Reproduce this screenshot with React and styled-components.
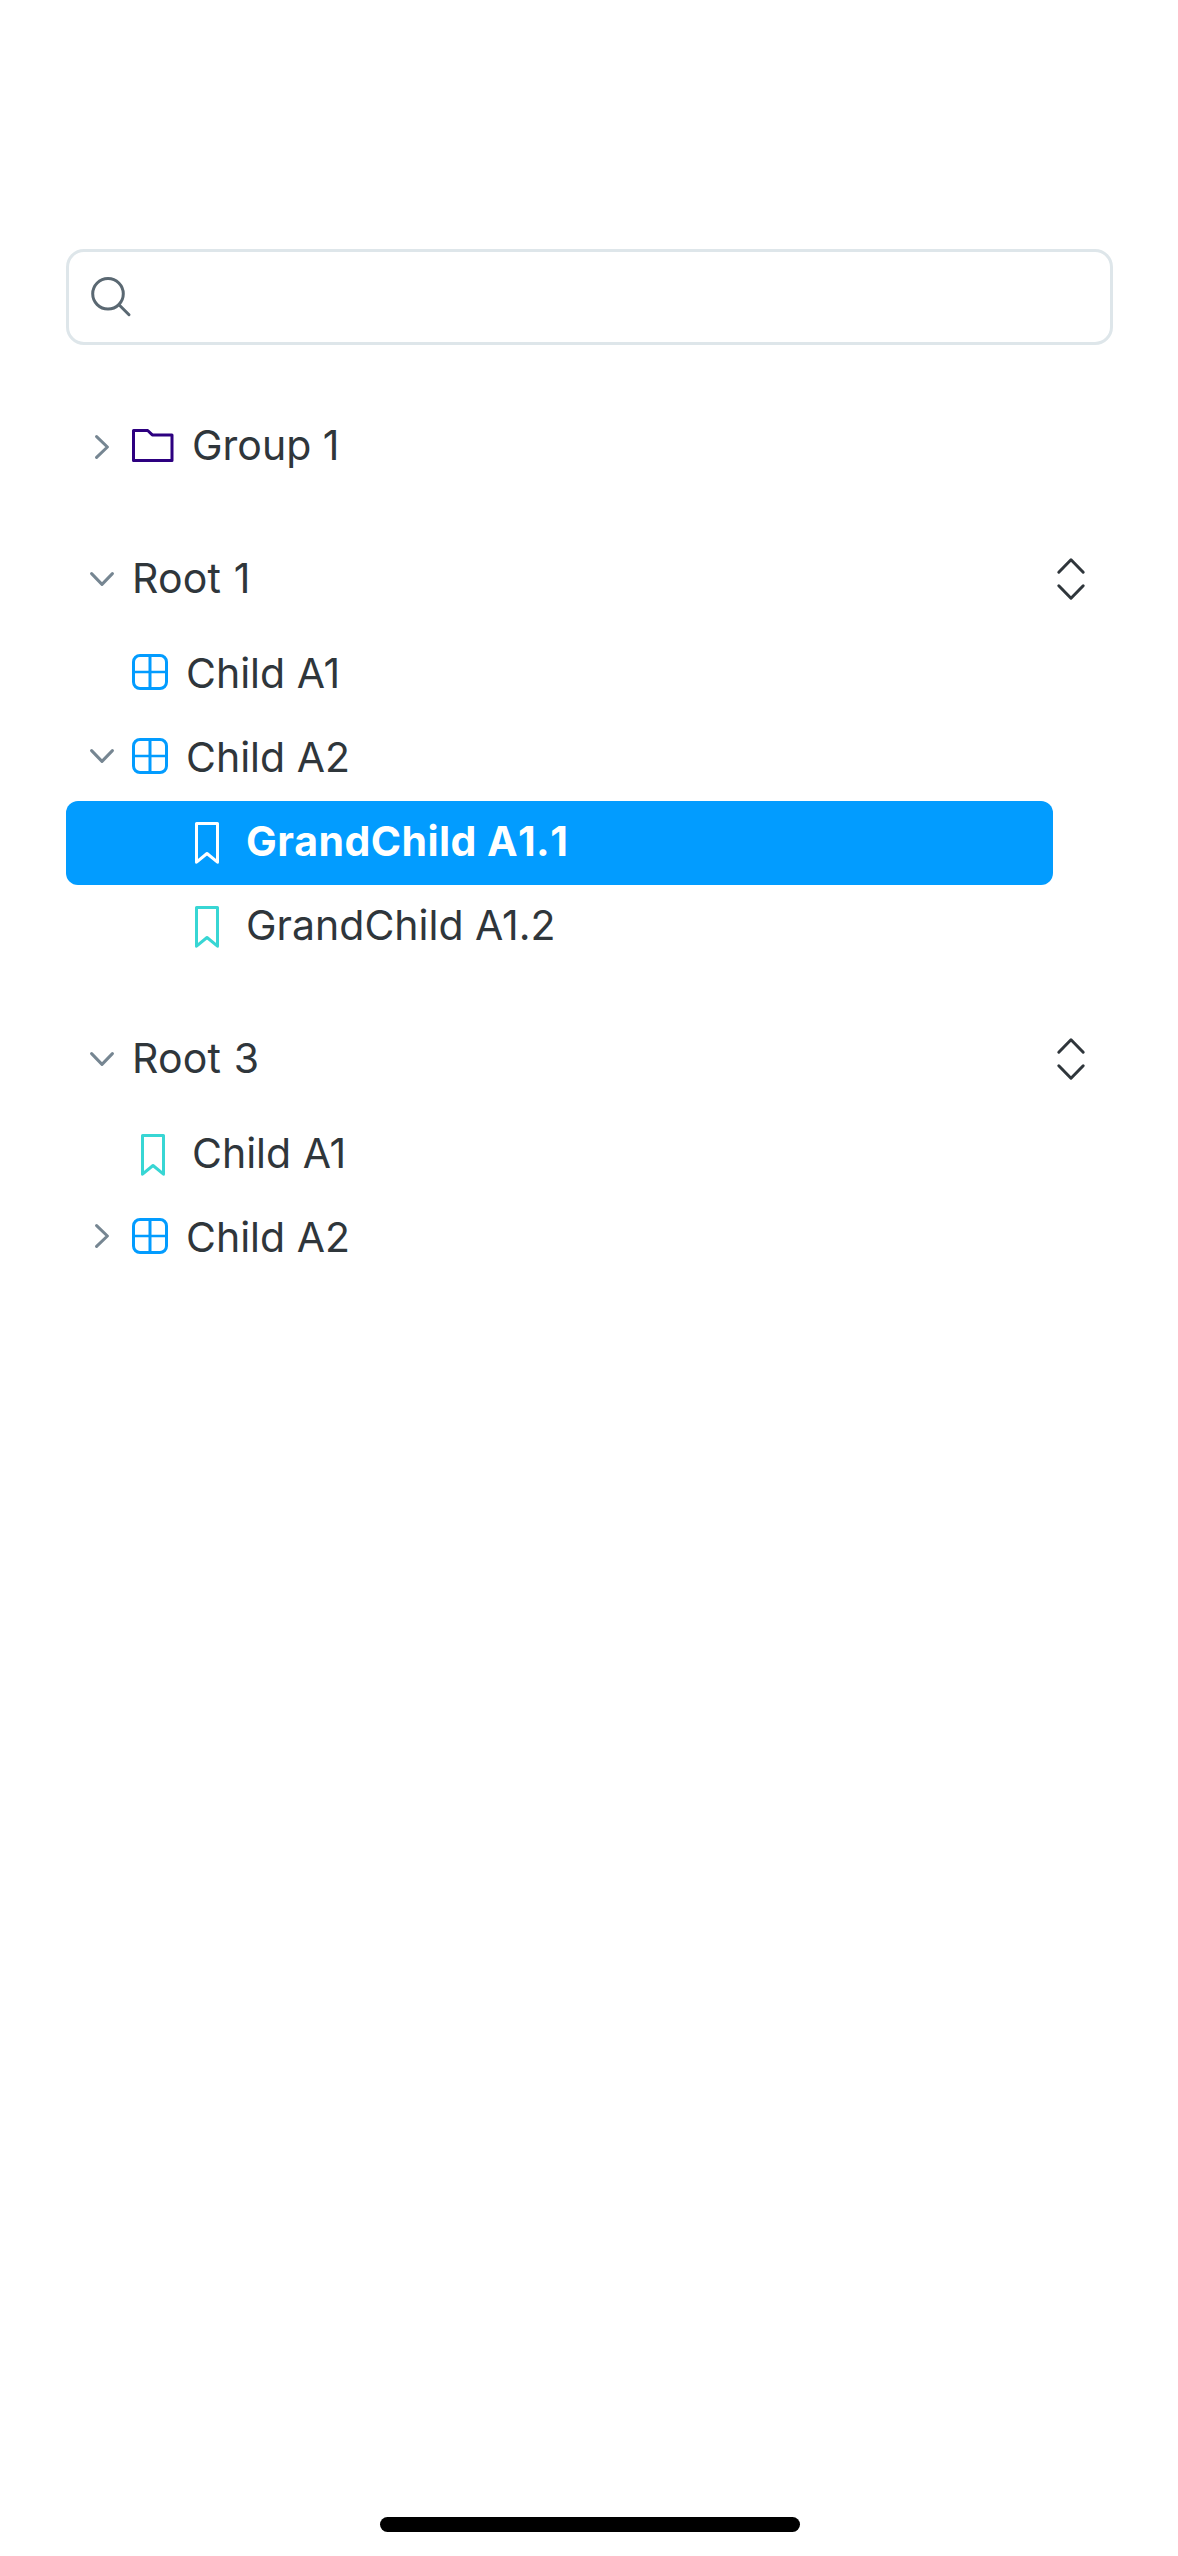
import React from "react";
import styled, { createGlobalStyle } from "styled-components";

const GlobalStyle = createGlobalStyle`
  *, *::before, *::after { box-sizing: border-box; }
  html, body { margin: 0; padding: 0; background: #ffffff; }
  body { font-family: Inter, "Liberation Sans", sans-serif; }
`;

const Screen = styled.main`
  display: flex;
  flex-direction: column;
  width: 1178px;
  height: 2556px;
  padding: 249px 65px 24px 66px;
  background: #ffffff;
  overflow: hidden;
`;

const SearchField = styled.label`
  display: flex;
  align-items: center;
  height: 96px;
  padding: 0 21px;
  border: 3px solid #dee6ea;
  border-radius: 18px;
  color: #5a6872;
`;

const SearchInput = styled.input`
  flex: 1;
  margin-left: 18px;
  border: 0;
  outline: 0;
  background: transparent;
  font: 400 41px Inter, sans-serif;
`;

const Tree = styled.nav`
  display: flex;
  flex-direction: column;
  margin-top: 60px;
`;

const Section = styled.section`
  display: flex;
  flex-direction: column;
  margin-top: 49px;
`;

const Row = styled.div`
  display: flex;
  align-items: flex-start;
  height: 84px;
  margin-right: 60px;
  padding-left: ${(p) => 24 + (p.$level || 0) * 54}px;
  border-radius: 12px;
  background: ${(p) => (p.$selected ? "#029cff" : "transparent")};
  color: ${(p) => (p.$selected ? "#ffffff" : "#2f363b")};
`;

const Header = styled(Row)`
  margin-right: 0;
  margin-bottom: 11px;
  padding-right: 24px;
`;

const ToggleSlot = styled.span`
  display: flex;
  flex: none;
  width: 24px;
  margin-right: 18px;
  padding-top: ${(p) => p.$top ?? 27}px;
  color: #768692;
`;

const IconSlot = styled.span`
  display: flex;
  flex: none;
  margin-right: 18px;
  padding-top: 21px;
  color: ${(p) => p.$color};
`;

const Label = styled.span`
  flex: 1;
  line-height: 80px;
  font-size: 41px;
  font-weight: ${(p) => (p.$bold ? 700 : 400)};
  font-kerning: ${(p) => (p.$bold ? "none" : "auto")};
  letter-spacing: ${(p) => (p.$bold ? 0.42 : 0)}px;
  white-space: nowrap;
`;

const Title = styled(Label)`
  letter-spacing: 0.15px;
  word-spacing: 1.2px;
`;

const SortSlot = styled.span`
  display: flex;
  padding-top: 17px;
`;

const Spacer = styled.div`
  flex: 1;
`;

const HomeIndicator = styled.div`
  width: 420px;
  height: 15px;
  margin-left: 314px;
  border-radius: 8px;
  background: #000000;
`;

const line = {
  fill: "none",
  stroke: "currentColor",
  strokeWidth: 3,
  strokeLinecap: "round",
  strokeLinejoin: "round",
};

const SearchIcon = () => (
  <svg width="42" height="42" viewBox="0 0 42 42" {...line}>
    <circle cx="18" cy="17.8" r="15.3" />
    <path d="M29 28.7 39 38.7" />
  </svg>
);

const ChevronRight = () => (
  <svg width="24" height="24" viewBox="0 0 24 24" {...line}>
    <path d="M6.6 1.6 17.4 12 6.6 22.4" />
  </svg>
);

const ChevronDown = () => (
  <svg width="24" height="24" viewBox="0 0 24 24" {...line}>
    <path d="M1.6 6.6 12 17.4 22.4 6.6" />
  </svg>
);

const FolderIcon = () => (
  <svg width="42" height="42" viewBox="0 0 42 42" {...line}>
    <path d="M1.5 4.5H15.7L20.3 8.9H40V34.6H1.5Z" />
  </svg>
);

const GridIcon = () => (
  <svg width="36" height="36" viewBox="0 0 36 36" {...line}>
    <rect x="1.5" y="1.5" width="33" height="33" rx="6.5" />
    <path d="M18 2V34" />
    <path d="M2 18H34" strokeWidth="2.5" />
  </svg>
);

const BookmarkIcon = () => (
  <svg width="42" height="42" viewBox="0 0 42 42" {...line}>
    <path d="M10.5 1.5H31.5V40.2L21 31.5 10.5 40.2Z" />
  </svg>
);

const SortIcon = () => (
  <svg width="36" height="48" viewBox="0 0 36 48" {...line}>
    <path d="M5.8 17.2 18 4.8 30.2 17.2M5.8 30.8 18 43.2 30.2 30.8" />
  </svg>
);

const icons = {
  folder: { Icon: FolderIcon, color: "#2d0080" },
  grid: { Icon: GridIcon, color: "#029cff" },
  bookmark: { Icon: BookmarkIcon, color: "#38d6d4" },
};

function Toggle({ state, top }) {
  return (
    <ToggleSlot $top={top}>
      {state === "open" && <ChevronDown />}
      {state === "closed" && <ChevronRight />}
    </ToggleSlot>
  );
}

function Item({ icon, label, toggle, toggleTop, level, selected }) {
  const { Icon, color } = icons[icon];
  return (
    <Row $level={level} $selected={selected}>
      <Toggle state={toggle} top={toggleTop} />
      <IconSlot $color={selected ? "#ffffff" : color}>
        <Icon />
      </IconSlot>
      <Label $bold={selected}>{label}</Label>
    </Row>
  );
}

function Root({ label, children }) {
  return (
    <Section>
      <Header>
        <Toggle state="open" top={29} />
        <Title>{label}</Title>
        <SortSlot>
          <SortIcon />
        </SortSlot>
      </Header>
      {children}
    </Section>
  );
}

export default function App() {
  return (
    <>
      <GlobalStyle />
      <Screen>
        <SearchField>
          <SearchIcon />
          <SearchInput aria-label="Search" />
        </SearchField>
        <Tree>
          <Item icon="folder" label="Group 1" toggle="closed" toggleTop={30} />
          <Root label="Root 1">
            <Item icon="grid" label="Child A1" />
            <Item icon="grid" label="Child A2" toggle="open" />
            <Item icon="bookmark" label="GrandChild A1.1" level={1} selected />
            <Item icon="bookmark" label="GrandChild A1.2" level={1} />
          </Root>
          <Root label="Root 3">
            <Item icon="bookmark" label="Child A1" />
            <Item icon="grid" label="Child A2" toggle="closed" />
          </Root>
        </Tree>
        <Spacer />
        <HomeIndicator />
      </Screen>
    </>
  );
}
